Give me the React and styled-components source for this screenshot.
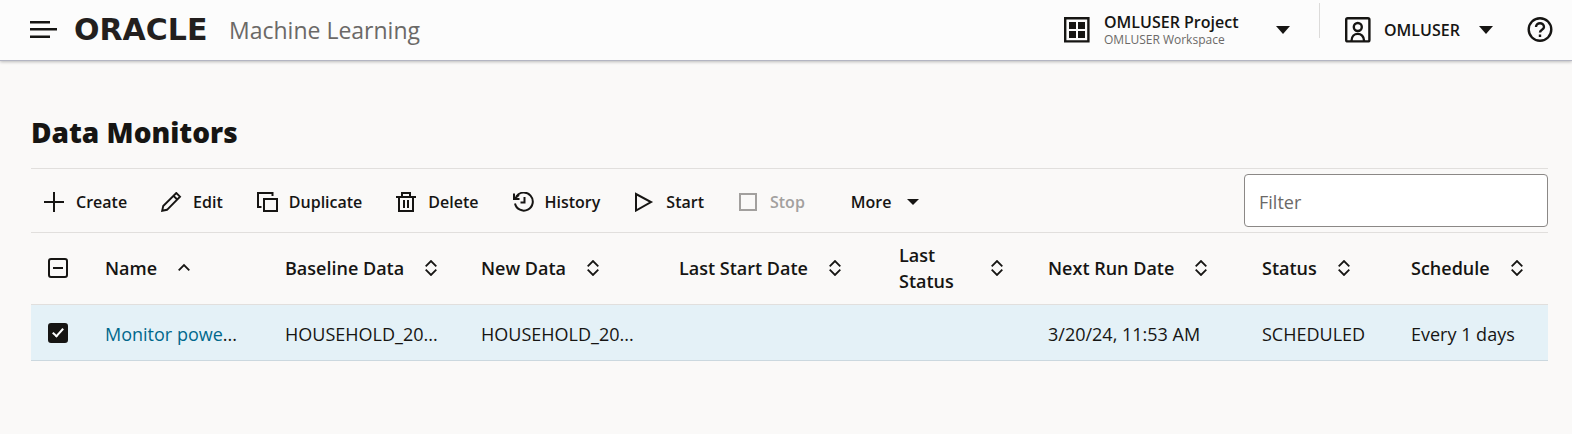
import React, { useEffect, useRef, useState } from "react";
import styled, { createGlobalStyle } from "styled-components";

const ink = "#161513";

const GlobalStyle = createGlobalStyle`
  *, *::before, *::after { box-sizing: border-box; }
  body {
    margin: 0;
    background: #faf9f8;
    color: ${ink};
    font-family: "Open Sans", "Noto Sans", sans-serif;
    font-size: 18px;
    line-height: 26px;
  }
  button, input { font: inherit; color: inherit; }
`;

const Icon = styled.svg.attrs({ "aria-hidden": true })`
  display: block;
  flex: none;
  width: ${(p) => p.$w}px;
  height: ${(p) => p.$h || p.$w}px;
  fill: none;
  stroke: currentColor;
  stroke-width: 2;
`;

const PlainButton = styled.button`
  display: flex;
  align-items: center;
  padding: 0;
  border: 0;
  background: none;
  cursor: pointer;
  white-space: nowrap;
`;

const Header = styled.header`
  display: flex;
  align-items: center;
  height: 60px;
  padding: 0 19px 0 30px;
  background: #fcfcfc;
  box-shadow: 0 1px 0 #b3b5c2, 0 2px 3px rgba(0, 0, 0, 0.25);
`;

const Brand = styled.div`
  display: flex;
  align-items: center;
  margin-left: 16px;
`;

const Wordmark = styled.span`
  min-width: 155px;
  font-family: "DejaVu Sans", sans-serif;
  font-size: 30px;
  font-weight: 700;
  line-height: 32px;
  color: #231f1e;
`;

const Product = styled.span`
  font-size: 23px;
  line-height: 32px;
  color: #6b6967;
  white-space: nowrap;
`;

const HeaderActions = styled.div`
  display: flex;
  align-items: center;
  height: 100%;
  margin-left: auto;
`;

const ProjectButton = styled(PlainButton)`
  gap: 14px;
  width: 226px;
  text-align: left;
`;

const ProjectText = styled.span`
  display: grid;
  flex: 1;
`;

const HeaderLabel = styled.span`
  font-size: 16px;
  font-weight: 600;
  line-height: 20px;
`;

const Workspace = styled.span`
  font-size: 12px;
  line-height: 16px;
  color: #6b6967;
`;

const Divider = styled.span`
  align-self: flex-start;
  width: 1px;
  height: 35px;
  margin: 3px 25px 0 29px;
  background: #dcdbda;
`;

const UserButton = styled(PlainButton)`
  gap: 13px;
  width: 148px;
  margin-right: 34px;

  ${HeaderLabel} {
    flex: 1;
    text-align: left;
  }
`;

const Main = styled.main`
  padding: 52px 24px 72px 31px;
`;

const Title = styled.h1`
  margin: 0 0 16px;
  font-size: 28px;
  font-weight: 800;
  line-height: 40px;
`;

const Toolbar = styled.div`
  display: flex;
  align-items: center;
  justify-content: space-between;
  height: 65px;
  border: solid #e1dfdd;
  border-width: 1px 0;
`;

const Actions = styled.div`
  display: flex;
  align-items: center;
  gap: 34px;
  padding: 2px 0 0 13px;
`;

const Action = styled(PlainButton)`
  gap: 11px;
  font-size: 16px;
  font-weight: 600;
  line-height: 24px;

  &:disabled {
    color: #a2a09e;
    cursor: default;
  }
`;

const MoreAction = styled(Action)`
  gap: 16px;
  margin-left: 12px;
`;

const Filter = styled.input`
  width: 304px;
  height: 53px;
  padding: 2px 14px 0;
  border: 1px solid #8b8886;
  border-radius: 4px;
  background: #fff;

  &::placeholder {
    color: #6b6967;
    opacity: 1;
  }
`;

const Table = styled.table`
  width: 100%;
  table-layout: fixed;
  border-collapse: collapse;
`;

const Column = styled.col`
  width: ${(p) => p.$width}px;
`;

const HeadCell = styled.th`
  height: 71px;
  padding: 0 0 0 19px;
  border-bottom: 1px solid #e1dfdd;
  font-weight: 600;
  text-align: left;
`;

const SortButton = styled(PlainButton)`
  gap: 21px;
  max-width: ${(p) => (p.$wrap ? "104px" : "none")};
  width: ${(p) => (p.$wrap ? "100%" : "auto")};
  justify-content: ${(p) => (p.$wrap ? "space-between" : "flex-start")};
  white-space: ${(p) => (p.$wrap ? "normal" : "nowrap")};
  font-weight: 600;
  text-align: left;
`;

const Row = styled.tr`
  background: #e4f1f7;
`;

const Cell = styled.td`
  height: 56px;
  padding: 3px 0 0 19px;
  border-bottom: 1px solid #cbd8df;
  white-space: nowrap;
  vertical-align: middle;
`;

const CheckCell = styled(Cell)`
  padding: 2px 0 0 17px;
`;

const CheckHead = styled(HeadCell)`
  padding: 0 0 0 17px;
`;

const Checkbox = styled.input.attrs({ type: "checkbox" })`
  appearance: none;
  display: grid;
  place-items: center;
  width: 20px;
  height: 20px;
  margin: 0;
  border: 2px solid ${ink};
  border-radius: 3px;

  &:checked { background: ${ink}; }

  &:checked::before {
    content: "";
    width: 6px;
    height: 11px;
    margin-bottom: 3px;
    border: solid #fff;
    border-width: 0 2px 2px 0;
    transform: rotate(42deg);
  }

  &:indeterminate { background: transparent; }

  &:indeterminate::before {
    content: "";
    width: 10px;
    height: 2px;
    margin: 0;
    border: 0;
    background: ${ink};
    transform: none;
  }
`;

const NameLink = styled.a`
  color: #00688c;
  text-decoration: none;
`;

const Caret = ({ width = 14, height = 8 }) => (
  <Icon $w={width} $h={height} viewBox="0 0 14 8" preserveAspectRatio="none">
    <path d="M0 0h14L7 8z" fill="currentColor" stroke="none" />
  </Icon>
);

const SortIcon = ({ ascending }) => (
  <Icon $w={12} $h={16} viewBox="0 0 12 16">
    {ascending ? (
      <path d="M0.700 10.300L6 5l5.300 5.300" strokeWidth="1.8" />
    ) : (
      <path d="M0.700 6.300L6 1l5.300 5.300M0.700 9.700L6 15l5.300-5.300" strokeWidth="1.8" />
    )}
  </Icon>
);

const drawings = {
  Create: <path d="M10 0v20M0 10h20" />,
  Edit: <path d="M1.200 18.800l1-4.800L15.300 1l3.700 3.700L6 17.800zM12.500 3.800l3.700 3.700" strokeWidth="1.9" />,
  Duplicate: <path d="M4.500 15H1V1h14.500v3M7 7h13v12H7z" />,
  Delete: <path d="M0 5h20M6 5V1h8v4M3 5v14h14V5M8 8v8M12 8v8" />,
  History: (
    <>
      <path d="M3.300 4.600A9 9 0 1 1 2 11.500M11.500 5v5.500H7.500" />
      <path d="M1 1.500V7h5.500M1.500 6.500L6 3" />
    </>
  ),
  Start: <path d="M2 2v16.500L17 10z" />,
  Stop: <path d="M2 2h16v16H2z" />,
};

const actions = [
  { label: "Create" },
  { label: "Edit" },
  { label: "Duplicate" },
  { label: "Delete" },
  { label: "History" },
  { label: "Start" },
  { label: "Stop", disabled: true },
];

const columns = [
  { label: "Name", width: 180, ascending: true },
  { label: "Baseline Data", width: 196 },
  { label: "New Data", width: 198 },
  { label: "Last Start Date", width: 220 },
  { label: "Last Status", width: 149, wrap: true },
  { label: "Next Run Date", width: 214 },
  { label: "Status", width: 149 },
  { label: "Schedule", width: 156 },
];

export default function App() {
  const selectAll = useRef(null);
  const [selected, setSelected] = useState(true);

  useEffect(() => {
    selectAll.current.indeterminate = selected;
  }, [selected]);

  return (
    <>
      <GlobalStyle />
      <Header>
        <PlainButton aria-label="Open navigation">
          <Icon $w={28} $h={18} viewBox="0 0 28 18">
            <path d="M0 1.300h20M0 8.300h27M0 15.700h20" strokeWidth="2.4" />
          </Icon>
        </PlainButton>
        <Brand>
          <Wordmark>ORACLE</Wordmark>
          <Product>Machine Learning</Product>
        </Brand>
        <HeaderActions>
          <ProjectButton>
            <Icon $w={26} viewBox="0 0 26 26">
              <path d="M1.200 1.200h23.200v23.200H1.200z" strokeWidth="2.4" />
              <path d="M5 5h7v7H5zM14 5h7v7h-7zM5 14h7v7H5zM14 14h7v7h-7z" fill="currentColor" stroke="none" />
            </Icon>
            <ProjectText>
              <HeaderLabel>OMLUSER Project</HeaderLabel>
              <Workspace>OMLUSER Workspace</Workspace>
            </ProjectText>
            <Caret />
          </ProjectButton>
          <Divider />
          <UserButton>
            <Icon $w={26} viewBox="0 0 26 26">
              <rect x="1.200" y="1.200" width="23.200" height="23.200" rx="1.500" strokeWidth="2.4" />
              <circle cx="12.800" cy="10" r="4" strokeWidth="2.4" />
              <path d="M6.500 24c0-9.500 12.600-9.500 12.600 0" strokeWidth="2.4" />
            </Icon>
            <HeaderLabel>OMLUSER</HeaderLabel>
            <Caret />
          </UserButton>
          <PlainButton aria-label="Help">
            <Icon $w={26} viewBox="0 0 26 26">
              <circle cx="13" cy="12.500" r="11.300" strokeWidth="2.4" />
              <path d="M9 10c0-5 8-5 8 0 0 3-4 2.500-4 5.500M13 17.500v2.500" strokeWidth="2.4" />
            </Icon>
          </PlainButton>
        </HeaderActions>
      </Header>
      <Main>
        <Title>Data Monitors</Title>
        <Toolbar role="toolbar" aria-label="Monitor actions">
          <Actions>
            {actions.map(({ label, disabled }) => (
              <Action key={label} disabled={disabled}>
                <Icon $w={21} $h={20} viewBox="0 0 21 20">{drawings[label]}</Icon>
                {label}
              </Action>
            ))}
            <MoreAction>
              More
              <Caret width={12} height={6} />
            </MoreAction>
          </Actions>
          <Filter type="text" placeholder="Filter" aria-label="Filter" />
        </Toolbar>
        <Table>
          <colgroup>
            <Column $width={55} />
            {columns.map((c) => <Column key={c.label} $width={c.width} />)}
          </colgroup>
          <thead>
            <tr>
              <CheckHead>
                <Checkbox
                  ref={selectAll}
                  aria-label="Select all monitors"
                  checked={selected}
                  onChange={() => setSelected(!selected)}
                />
              </CheckHead>
              {columns.map((c) => (
                <HeadCell key={c.label} scope="col">
                  <SortButton $wrap={c.wrap}>
                    {c.label}
                    <SortIcon ascending={c.ascending} />
                  </SortButton>
                </HeadCell>
              ))}
            </tr>
          </thead>
          <tbody>
            <Row>
              <CheckCell>
                <Checkbox
                  aria-label="Select monitor"
                  checked={selected}
                  onChange={(e) => setSelected(e.target.checked)}
                />
              </CheckCell>
              <Cell><NameLink href="#monitor">Monitor powe</NameLink>...</Cell>
              <Cell>HOUSEHOLD_20...</Cell>
              <Cell>HOUSEHOLD_20...</Cell>
              <Cell />
              <Cell />
              <Cell>3/20/24, 11:53 AM</Cell>
              <Cell>SCHEDULED</Cell>
              <Cell>Every 1 days</Cell>
            </Row>
          </tbody>
        </Table>
      </Main>
    </>
  );
}
